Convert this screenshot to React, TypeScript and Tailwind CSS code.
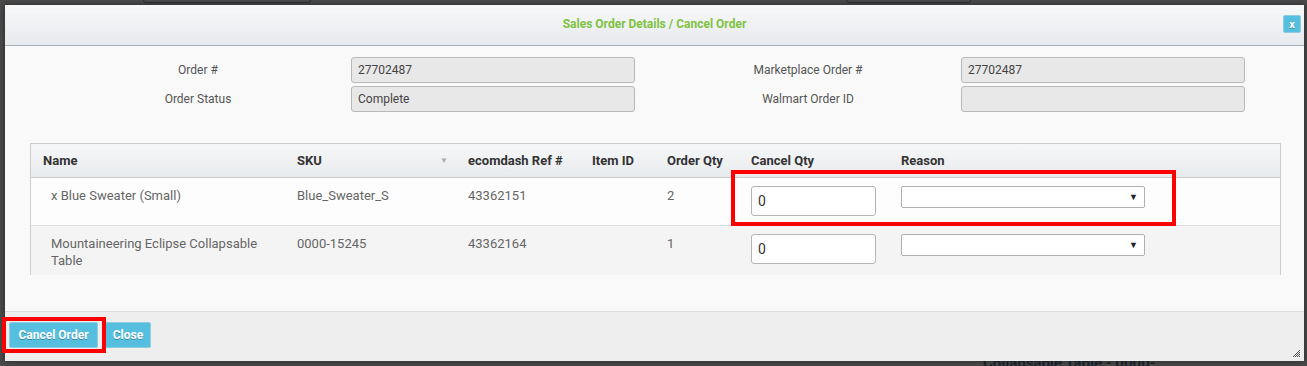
export default function App() {
  const rows = [
    { name: ["x Blue Sweater (Small)"], sku: "Blue_Sweater_S", ref: "43362151", qty: "2", bg: "bg-[#fdfdfd]", h: "h-[48px]" },
    { name: ["Mountaineering Eclipse Collapsable", "Table"], sku: "0000-15245", ref: "43362164", qty: "1", bg: "bg-[#f4f4f4]", h: "h-[56px]" },
  ];
  const cols = "grid grid-cols-[258px_171px_124px_75px_84px_150px_1fr]";

  return (
    <div
      className="relative w-[1307px] h-[366px] overflow-hidden bg-[#4a4a4a] pt-[5px] pl-[5px]"
      style={{ fontFamily: '"Liberation Sans Narrow", "Roboto", "Liberation Sans", sans-serif' }}
    >
      {/* page behind the overlay */}
      <div className="absolute left-[143px] -top-[10px] w-[168px] h-[13px] rounded-[3px] border border-[#2e2e2e] bg-[#4c4c4c]" />
      <div className="absolute left-[846px] -top-[10px] w-[125px] h-[13px] rounded-[3px] border border-[#2e2e2e] bg-[#4c4c4c]" />
      <div className="absolute left-[983px] top-[352px] text-[15px] font-bold text-[#1d2631]">Collapsable Table - 0000-</div>

      <div className="relative z-10 flex flex-col w-[1299px] h-[356px] bg-[#f9f9f9] shadow-[0_0_6px_rgba(0,0,0,0.5)]">
        {/* header */}
        <div className="relative h-[41px] flex items-center justify-center border-b border-[#a6b1ba] bg-gradient-to-b from-[#f7f8f9] to-[#e7eaee]">
          <span className="text-[12px] font-bold text-[#7fc241] pb-[3px]">Sales Order Details / Cancel Order</span>
          <button className="absolute right-[3px] top-[10px] w-[18px] h-[18px] flex items-center justify-center rounded-[2px] border border-[#8fcde0] bg-[#56bfe0] text-white text-[11px] font-bold leading-none [text-shadow:0_1px_0_rgba(0,0,0,0.3)]">
            x
          </button>
        </div>

        {/* body */}
        <div className="flex-1 flex flex-col pt-[11px]">
          <div className="ml-[40px] grid grid-cols-[306px_284px_20px_306px_284px] gap-y-[3px] text-[12px]">
            {[
              ["Order #", "27702487", "Marketplace Order #", "27702487"],
              ["Order Status", "Complete", "Walmart Order ID", ""],
            ].map((r, i) => (
              <div key={i} className="contents">
                <div className="flex items-center justify-center text-[#555]">{r[0]}</div>
                <div className="h-[26px] flex items-center px-[6px] rounded-[3px] border border-[#b9b9b9] bg-[#e8e8e8] text-[#444]">{r[1]}</div>
                <div />
                <div className="flex items-center justify-center text-[#555]">{r[2]}</div>
                <div className="h-[26px] flex items-center px-[6px] rounded-[3px] border border-[#b9b9b9] bg-[#e8e8e8] text-[#444]">{r[3]}</div>
              </div>
            ))}
          </div>

          {/* table */}
          <div className="relative mt-[31px] ml-[25px] w-[1251px] h-[132px] overflow-hidden border border-b-0 border-[#cccccc]">
            <div className={`${cols} h-[34px] items-center border-b border-[#cccccc] bg-gradient-to-b from-[#f6f7f8] to-[#e8ebee] text-[13px] font-bold text-[#333]`}>
              <div className="pl-[12px]">Name</div>
              <div className="pl-[8px] flex items-center justify-between pr-[12px]">
                <span>SKU</span>
                <span className="text-[8px] text-[#aaa] font-normal">▼</span>
              </div>
              <div className="pl-[8px]">ecomdash Ref #</div>
              <div className="pl-[8px]">Item ID</div>
              <div className="pl-[8px]">Order Qty</div>
              <div className="pl-[8px]">Cancel Qty</div>
              <div className="pl-[8px]">Reason</div>
            </div>
            {rows.map((r, i) => (
              <div key={i} className={`${cols} ${r.h} border-b border-[#dddddd] ${r.bg} text-[13px] leading-[17px] text-[#666]`}>
                <div className="pl-[20px] pt-[9px]">
                  {r.name.map((n, j) => (
                    <div key={j}>{n}</div>
                  ))}
                </div>
                <div className="pl-[8px] pt-[9px]">{r.sku}</div>
                <div className="pl-[8px] pt-[9px]">{r.ref}</div>
                <div className="pl-[8px] pt-[9px]" />
                <div className="pl-[8px] pt-[9px]">{r.qty}</div>
                <div className="pl-[8px] pt-[8px]">
                  <div className="w-[125px] h-[30px] flex items-center px-[6px] rounded-[3px] border border-[#b5b5b5] bg-white text-[14px] text-[#333]">0</div>
                </div>
                <div className="pl-[8px] pt-[8px]">
                  <div className="w-[244px] h-[22px] flex items-center justify-end pr-[6px] rounded-[2px] border border-[#b0b0b0] bg-white text-[9px] text-[#222]">▼</div>
                </div>
              </div>
            ))}
            <div className="absolute left-[700px] top-[26px] w-[445px] h-[56px] border-4 border-[#ff0000]" />
          </div>
        </div>

        {/* footer */}
        <div className="relative h-[50px] flex gap-[7px] pt-[10px] pl-[4px] border-t border-[#dcdcdc] bg-[#eeeeee]">
          <div className="relative">
            <button className="w-[89px] h-[26px] rounded-[2px] border border-[#8fcde0] bg-[#56bfe0] text-[12px] font-bold text-white [text-shadow:0_1px_0_rgba(0,0,0,0.3)]">
              Cancel Order
            </button>
            <div className="absolute -left-[7px] -top-[5px] w-[104px] h-[36px] border-4 border-[#ff0000]" />
          </div>
          <button className="w-[46px] h-[26px] rounded-[2px] border border-[#8fcde0] bg-[#56bfe0] text-[12px] font-bold text-white [text-shadow:0_1px_0_rgba(0,0,0,0.3)]">
            Close
          </button>
          <svg className="absolute right-[4px] bottom-[4px]" width="8" height="8" viewBox="0 0 8 8">
            <path d="M1 8 L8 1 M3 8 L8 3 M5 8 L8 5 M7 8 L8 7" stroke="#555" strokeWidth="1" />
          </svg>
        </div>
      </div>
    </div>
  );
}
